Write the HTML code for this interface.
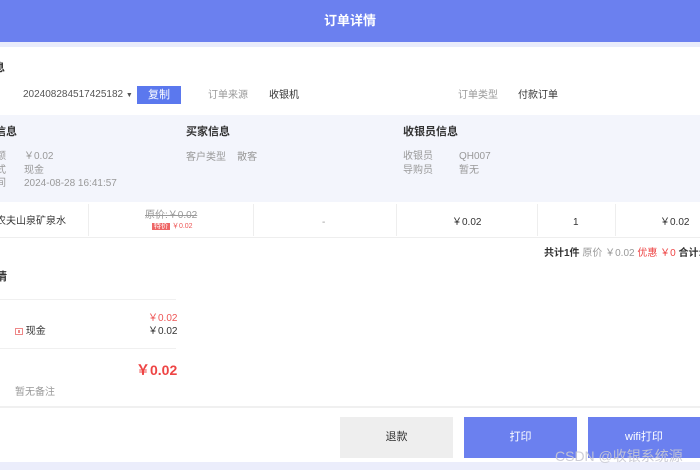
<!DOCTYPE html>
<html><head><meta charset="utf-8"><style>
*{margin:0;padding:0;box-sizing:border-box}
body{width:700px;height:470px;overflow:hidden;background:#fff;font-family:"Liberation Sans","Noto Sans CJK SC",sans-serif;position:relative;font-size:10px;line-height:14px;color:#333}
.a{position:absolute;white-space:nowrap}
.g{color:#999}
</style></head><body>
<div class="a" style="left:0;top:0;width:700px;height:42px;background:#6b80ef"></div>
<div class="a" style="left:0;top:42px;width:700px;height:5px;background:#e9ecfb"></div>
<div class="a" style="left:0;top:12px;width:700px;text-align:center;color:#fff;font-size:13px;line-height:18px;font-weight:bold">订单详情</div>

<div class="a" style="left:-6px;top:61px;font-size:11px;font-weight:bold">息</div>
<div class="a" style="left:23px;top:88px;color:#555">202408284517425182 <span style="font-size:7px">▼</span></div>
<div class="a" style="left:137px;top:86px;width:44px;height:18px;background:#5b78ee;color:#fff;text-align:center;line-height:18px;font-size:11px">复制</div>
<div class="a g" style="left:208px;top:89px">订单来源</div>
<div class="a" style="left:269px;top:89px">收银机</div>
<div class="a g" style="left:458px;top:89px">订单类型</div>
<div class="a" style="left:518px;top:89px">付款订单</div>

<div class="a" style="left:0;top:115px;width:700px;height:87px;background:#f3f5fc"></div>
<div class="a" style="left:-5px;top:125px;font-size:11px;font-weight:bold">信息</div>
<div class="a g" style="left:-4px;top:150px;line-height:13.5px">额<br>式<br>间</div>
<div class="a g" style="left:24px;top:150px;line-height:13.5px">￥0.02<br>现金<br>2024-08-28 16:41:57</div>
<div class="a" style="left:186px;top:125px;font-size:11px;font-weight:bold">买家信息</div>
<div class="a g" style="left:186px;top:151px">客户类型 &nbsp;&nbsp; 散客</div>
<div class="a" style="left:403px;top:125px;font-size:11px;font-weight:bold">收银员信息</div>
<div class="a g" style="left:403px;top:150px;line-height:13.5px">收银员<br>导购员</div>
<div class="a g" style="left:459px;top:150px;line-height:13.5px">QH007<br>暂无</div>

<div class="a" style="left:0;top:237px;width:700px;height:1px;background:#eee"></div>
<div class="a" style="left:88px;top:204px;width:1px;height:32px;background:#eee"></div>
<div class="a" style="left:253px;top:204px;width:1px;height:32px;background:#eee"></div>
<div class="a" style="left:396px;top:204px;width:1px;height:32px;background:#eee"></div>
<div class="a" style="left:537px;top:204px;width:1px;height:32px;background:#eee"></div>
<div class="a" style="left:615px;top:204px;width:1px;height:32px;background:#eee"></div>
<div class="a" style="left:-4px;top:215px">农夫山泉矿泉水</div>
<div class="a g" style="left:145px;top:209px;text-decoration:line-through">原价:￥0.02</div>
<div class="a" style="left:152px;top:222px;font-size:7px;line-height:10px;color:#e55"><span style="background:#e66;color:#fff;padding:0 2px">特价</span> ￥0.02</div>
<div class="a g" style="left:322px;top:216px">-</div>
<div class="a" style="left:452px;top:216px">￥0.02</div>
<div class="a" style="left:573px;top:216px">1</div>
<div class="a" style="left:660px;top:216px">￥0.02</div>

<div class="a" style="left:544px;top:247px"><b>共计1件</b> <span class="g">原价 ￥0.02</span> <span style="color:#e44">优惠 ￥0</span> <b>合计:</b></div>

<div class="a" style="left:-4px;top:270px;font-size:11px;font-weight:bold">情</div>
<div class="a" style="left:0;top:299px;width:176px;height:1px;background:#f0f0f0"></div>
<div class="a" style="left:148px;top:312px;color:#e55">￥0.02</div>
<div class="a" style="left:15px;top:325px"><span style="display:inline-block;width:8px;height:7px;border:1px solid #e88;vertical-align:middle;position:relative"><span style="position:absolute;left:2px;top:1px;width:2px;height:3px;background:#e88"></span></span> 现金</div>
<div class="a" style="left:148px;top:325px">￥0.02</div>
<div class="a" style="left:0;top:348px;width:176px;height:1px;background:#f0f0f0"></div>
<div class="a" style="left:136px;top:360px;color:#e44;font-size:14px;line-height:20px;font-weight:bold">￥0.02</div>
<div class="a g" style="left:15px;top:386px">暂无备注</div>

<div class="a" style="left:0;top:406px;width:700px;height:2px;background:#f0f0f0"></div>
<div class="a" style="left:340px;top:417px;width:113px;height:41px;background:#eeeeee;text-align:center;line-height:41px;font-size:11px">退款</div>
<div class="a" style="left:464px;top:417px;width:113px;height:41px;background:#6b80ef;color:#fff;text-align:center;line-height:41px;font-size:11px">打印</div>
<div class="a" style="left:588px;top:417px;width:112px;height:41px;background:#6b80ef;color:#fff;text-align:center;line-height:41px;font-size:11px">wifi打印</div>
<div class="a" style="left:0;top:462px;width:700px;height:8px;background:#ebedfb"></div>
<div class="a" style="left:555px;top:446px;color:rgba(200,200,210,.9);font-size:14px;line-height:20px">CSDN @收银系统源</div>
</body></html>
